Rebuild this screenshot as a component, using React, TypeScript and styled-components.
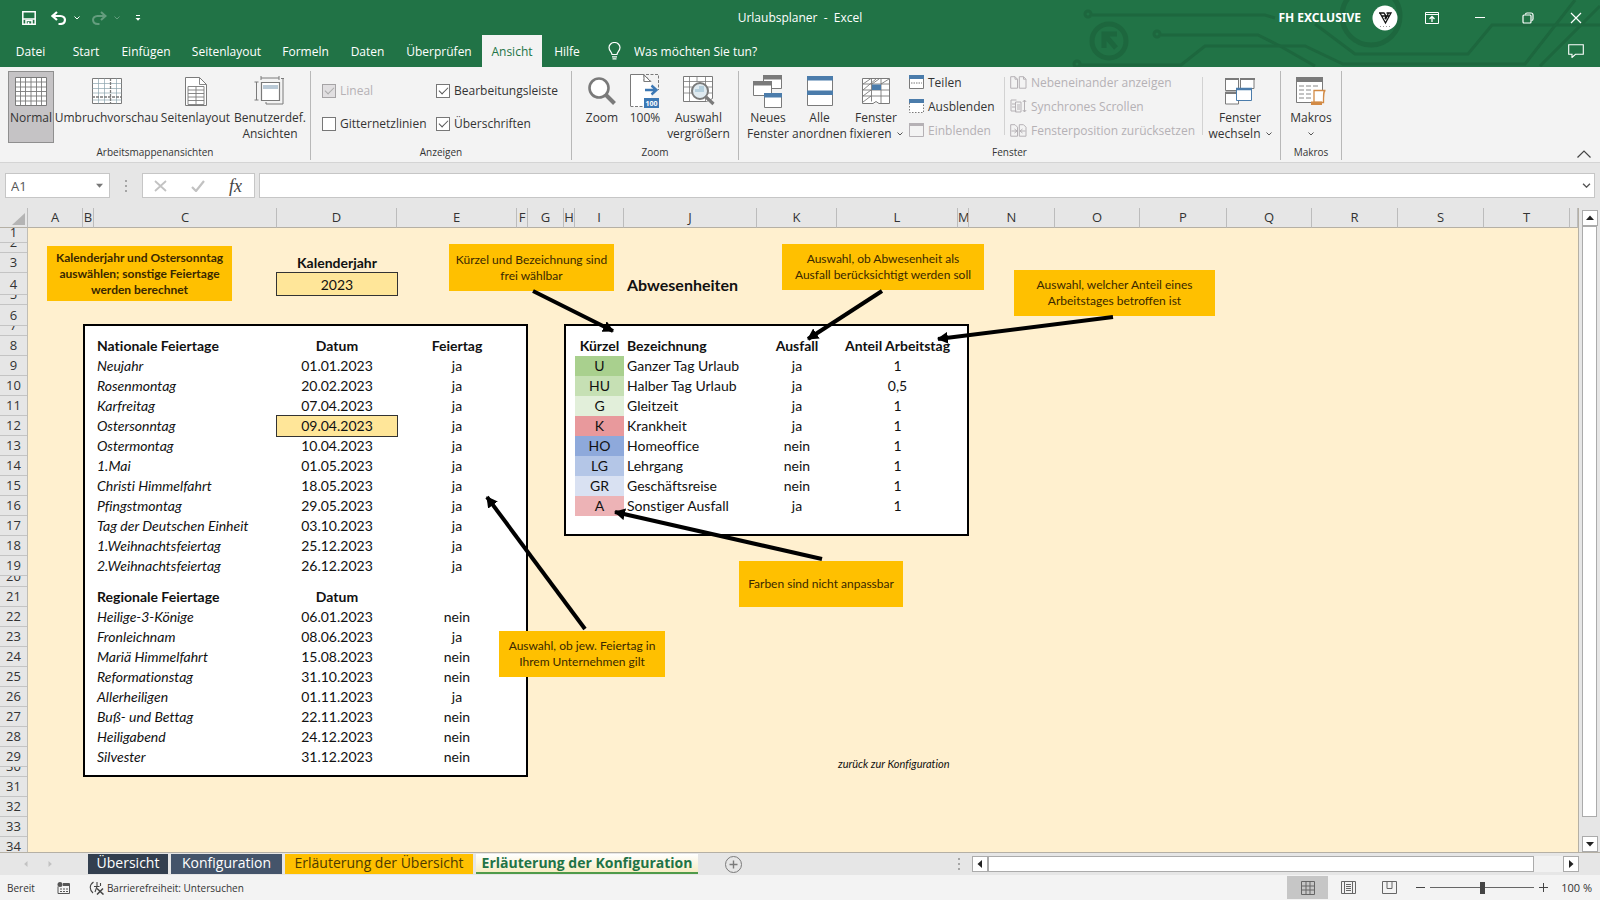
import React from 'react';
import styled, { createGlobalStyle, css } from 'styled-components';

const ui = `"Open Sans", "Noto Sans", sans-serif`;
const cellFont = `Lato, "Open Sans", sans-serif`;

const Global = createGlobalStyle`
  *, *::before, *::after { box-sizing: border-box; }
  body { margin: 0; font-family: ${ui}; font-size: 12px; color: #333; }
  button, input { font: inherit; color: inherit; margin: 0; padding: 0; }
  button { background: none; border: 0; }
  svg { display: block; flex: none; }
`;

const App = styled.div`
  display: flex;
  flex-direction: column;
  height: 100vh;
  overflow: hidden;
  background: #e6e6e6;
`;

/* ---------- title bar and tabs ---------- */

const Header = styled.header`
  position: relative;
  background: #217346;
  color: #fff;
`;
const Circuit = styled.svg`
  position: absolute;
  right: 0;
  top: 0;
`;
const TitleBar = styled.div`
  position: relative;
  display: grid;
  grid-template-columns: 1fr auto 1fr;
  align-items: center;
  height: 35px;
`;
const QuickAccess = styled.div`
  display: flex;
  align-items: center;
  padding-left: 22px;
`;
const QuickButton = styled.button<{ $gap: number; $dim?: boolean }>`
  margin-right: ${(p) => p.$gap}px;
  opacity: ${(p) => (p.$dim ? 0.3 : 1)};
`;
const Title = styled.h1`
  margin: 0;
  font-size: 12px;
  font-weight: 400;
  white-space: pre;
`;
const WindowArea = styled.div`
  display: flex;
  align-items: center;
  justify-content: flex-end;
`;
const Account = styled.button`
  display: flex;
  align-items: center;
  gap: 11px;
  margin-right: 10px;
  font-family: "Noto Sans", sans-serif;
  font-weight: 700;
`;
const WindowButton = styled.button`
  display: grid;
  place-items: center;
  width: 48px;
  height: 32px;
`;
const TabBar = styled.nav`
  position: relative;
  display: flex;
  height: 32px;
`;
const Tab = styled.button<{ $w: number; $active?: boolean }>`
  width: ${(p) => p.$w}px;
  white-space: nowrap;
  ${(p) => p.$active && css`background: #f3f3f3; color: #217346;`}
`;
const TellMe = styled.label`
  display: flex;
  align-items: center;
  gap: 13px;
  padding-left: 16px;
`;
const TellMeInput = styled.input`
  width: 160px;
  border: 0;
  outline: 0;
  background: transparent;
  &::placeholder { color: #fff; opacity: 1; }
`;
const Comment = styled.button`
  margin: 0 16px 0 auto;
`;

/* ---------- ribbon ---------- */

const Ribbon = styled.section`
  position: relative;
  display: flex;
  height: 96px;
  background: #f3f3f3;
  border-bottom: 1px solid #d4d4d4;
`;
const Group = styled.div<{ $w: number }>`
  display: flex;
  flex-direction: column;
  width: ${(p) => p.$w}px;
  margin: 4px 0 2px;
  border-right: 1px solid #b8b8b8;
`;
const GroupBody = styled.div<{ $pad: number }>`
  display: flex;
  height: 75px;
  padding-left: ${(p) => p.$pad}px;
`;
const GroupLabel = styled.div`
  font-size: 10px;
  line-height: 16px;
  text-align: center;
`;
const BigButton = styled.button<{ $w: number; $on?: boolean }>`
  display: flex;
  flex-direction: column;
  align-items: center;
  width: ${(p) => p.$w}px;
  height: 72px;
  line-height: 16px;
  white-space: nowrap;
  border: 1px solid ${(p) => (p.$on ? '#8f8f8f' : 'transparent')};
  background: ${(p) => (p.$on ? '#c5c3c5' : 'transparent')};
`;
const BigIcon = styled.span`
  display: grid;
  place-items: center;
  height: 38px;
`;
const Caption = styled.span`
  display: flex;
  align-items: center;
  gap: 5px;
  height: 16px;
  flex: none;
`;
const Checks = styled.div`
  display: grid;
  grid-template-columns: 114px auto;
  grid-template-rows: 33px 33px;
  align-items: center;
  padding-top: 3px;
`;
const CheckLabel = styled.label<{ $off?: boolean }>`
  display: flex;
  align-items: center;
  gap: 4px;
  white-space: nowrap;
  color: ${(p) => (p.$off ? '#b5b1b5' : '#333')};
`;
const Check = styled.input`
  appearance: none;
  display: grid;
  place-items: center;
  width: 14px;
  height: 14px;
  flex: none;
  border: 1px solid #777;
  background: #fff;
  &:disabled { border-color: #a5a3a5; background: #e1dfe1; }
  &:checked::after {
    content: '';
    width: 9px;
    height: 5px;
    margin-bottom: 3px;
    border: solid #555;
    border-width: 0 0 1px 1px;
    transform: rotate(-45deg);
  }
  &:checked:disabled::after { border-color: #aaa; }
`;
const SmallColumn = styled.div<{ $w: number }>`
  display: flex;
  flex-direction: column;
  width: ${(p) => p.$w}px;
  height: 58px;
  margin-top: 6px;
  border-right: 1px solid #d2d2d2;
`;
const SmallButton = styled.button<{ $off?: boolean }>`
  display: flex;
  align-items: center;
  gap: 4px;
  flex: none;
  height: 24px;
  padding-left: 5px;
  white-space: nowrap;
  color: ${(p) => (p.$off ? '#b5b1b5' : '#333')};
  &:first-child { margin-top: -7px; }
`;
const Collapse = styled.button`
  margin: auto 9px 4px auto;
`;

/* ---------- formula bar ---------- */

const FormulaRow = styled.div`
  display: flex;
  align-items: center;
  padding: 10px 5px;
  height: 45px;
`;
const NameBox = styled.div`
  display: flex;
  align-items: center;
  width: 105px;
  height: 25px;
  padding: 0 6px 0 5px;
  border: 1px solid #c6c6c6;
  background: #fff;
`;
const NameInput = styled.input`
  flex: 1;
  min-width: 0;
  border: 0;
  outline: 0;
  font-size: 13px;
  color: #555;
`;
const FxBox = styled.div`
  display: flex;
  align-items: center;
  justify-content: space-between;
  width: 113px;
  height: 25px;
  margin-right: 4px;
  padding: 0 12px 0 11px;
  border: 1px solid #c6c6c6;
  background: #fff;
`;
const Fx = styled.button`
  font-family: "Liberation Serif", serif;
  font-size: 18px;
  font-style: italic;
  line-height: 20px;
  color: #444;
`;
const FormulaBox = styled.div`
  display: flex;
  align-items: center;
  flex: 1;
  height: 25px;
  padding-right: 3px;
  border: 1px solid #c6c6c6;
  background: #fff;
`;
const FormulaInput = styled.input`
  flex: 1;
  border: 0;
  outline: 0;
`;
const Grip = styled.span<{ $m: string }>`
  width: 2px;
  height: 12px;
  margin: ${(p) => p.$m};
  background: repeating-linear-gradient(#a5a5a5 0 2px, transparent 2px 5px);
`;

/* ---------- sheet ---------- */

const Work = styled.main`
  display: flex;
  flex: 1;
  min-height: 0;
`;
const Sheet = styled.div`
  position: relative;
  flex: 1;
  min-width: 0;
  overflow: hidden;
  background: #fff0cf;
  border-right: 1px solid #b5b0a5;
`;
const GridTable = styled.table`
  width: 100%;
  table-layout: fixed;
  border-spacing: 0;
  font-family: ${cellFont};
  font-size: 14px;
  font-variant-ligatures: none;
  color: #111;
`;
const ColHead = styled.th`
  height: 20px;
  padding: 0;
  overflow: hidden;
  font-family: ${ui};
  font-size: 13px;
  font-weight: 400;
  line-height: 19px;
  color: #333;
  background: #e6e6e6;
  border-right: 1px solid #bcbcbc;
  border-bottom: 1px solid #b5b0a5;
`;
const RowHead = styled.th`
  padding: 0;
  font-family: ${ui};
  font-size: 13px;
  font-weight: 400;
  color: #333;
  background: #e6e6e6;
  border-right: 1px solid #c0bdb5;
`;
const RowNumber = styled.div<{ $h: number }>`
  display: flex;
  align-items: flex-end;
  justify-content: center;
  height: ${(p) => p.$h}px;
  overflow: hidden;
  line-height: 19px;
  border-bottom: 1px solid #c4c4c4;
`;
interface CellLook {
  $fill?: string;
  $align?: string;
  $bold?: boolean;
  $italic?: boolean;
  $size?: number;
  $boxed?: boolean;
  $edges?: string;
}
const Cell = styled.td<CellLook>`
  padding: 0;
  vertical-align: bottom;
  background: ${(p) => p.$fill || 'transparent'};
  ${(p) => p.$boxed && 'outline: 1px solid #333;'}
  ${(p) => p.$edges?.includes('l') && 'border-left: 2px solid #000;'}
  ${(p) => p.$edges?.includes('r') && 'border-right: 2px solid #000;'}
  ${(p) => p.$edges?.includes('b') && 'border-bottom: 2px solid #000;'}
`;
const CellText = styled.div<CellLook>`
  height: 20px;
  padding: 0 3px;
  line-height: 20px;
  white-space: nowrap;
  text-align: ${(p) => p.$align || 'center'};
  font-size: ${(p) => p.$size || 14}px;
  font-weight: ${(p) => (p.$bold ? 700 : 400)};
  font-style: ${(p) => (p.$italic ? 'italic' : 'normal')};
`;
const Arrows = styled.svg`
  position: absolute;
  left: 0;
  top: 20px;
  pointer-events: none;
`;
const Callout = styled.div<{ $x: number; $y: number; $w: number; $h: number; $bold?: boolean }>`
  position: absolute;
  left: ${(p) => p.$x}px;
  top: ${(p) => p.$y}px;
  width: ${(p) => p.$w}px;
  height: ${(p) => p.$h}px;
  display: grid;
  place-items: center;
  text-align: center;
  white-space: pre;
  background: #ffc000;
  color: #3a2800;
  font-family: ${cellFont};
  font-size: 12px;
  font-weight: ${(p) => (p.$bold ? 700 : 400)};
  line-height: 16px;
`;
const BackLink = styled.a`
  position: absolute;
  left: 838px;
  top: 548px;
  font-family: ${cellFont};
  font-size: 11px;
  font-style: italic;
  font-variant-ligatures: none;
  line-height: 16px;
  color: #111;
  text-decoration: none;
`;
const VScroll = styled.div`
  display: flex;
  flex-direction: column;
  width: 21px;
  padding: 2px 3px 0 3px;
`;
const HScroll = styled.div`
  display: flex;
  width: 607px;
  height: 16px;
  margin-right: 21px;
  background: #f1f1f1;
`;
const ScrollButton = styled.button`
  display: grid;
  place-items: center;
  width: 16px;
  height: 16px;
  flex: none;
  border: 1px solid #ababab;
  background: #fff;
`;
const Thumb = styled.div<{ $gap: string }>`
  flex: 1;
  margin: ${(p) => p.$gap};
  border: 1px solid #ababab;
  background: #fff;
`;

/* ---------- sheet tabs and status ---------- */

const SheetBar = styled.div`
  display: flex;
  align-items: center;
  height: 23px;
  border-top: 1px solid #b5b0a5;
`;
const SheetNav = styled.div`
  display: flex;
  gap: 18px;
  width: 88px;
  padding-left: 23px;
`;
const SheetTab = styled.button<{ $w: number; $bg: string; $fg?: string; $active?: boolean }>`
  width: ${(p) => p.$w}px;
  height: 20px;
  margin-right: 3px;
  padding-bottom: 3px;
  font-size: 14px;
  line-height: 17px;
  white-space: nowrap;
  background: ${(p) => p.$bg};
  color: ${(p) => p.$fg || '#fff'};
  ${(p) => p.$active && css`font-weight: 700; border-bottom: 2px solid #4f9a4a; padding-bottom: 1px;`}
`;
const AddSheet = styled.button`
  margin-left: 24px;
`;
const StatusBar = styled.footer`
  display: flex;
  align-items: center;
  height: 25px;
  padding: 0 8px 0 7px;
  background: #f3f3f3;
  font-size: 10px;
`;
const StatusButton = styled.button<{ $m: number }>`
  display: flex;
  align-items: center;
  gap: 2px;
  margin-left: ${(p) => p.$m}px;
`;
const ViewButton = styled.button<{ $on?: boolean }>`
  display: grid;
  place-items: center;
  width: 41px;
  height: 23px;
  background: ${(p) => (p.$on ? '#c6c6c6' : 'transparent')};
`;
const Spacer = styled.div`
  flex: 1;
`;
const ZoomRange = styled.input`
  appearance: none;
  width: 104px;
  height: 14px;
  margin: 0 5px;
  background: linear-gradient(#666, #666) center / 100% 1px no-repeat;
  &::-webkit-slider-thumb {
    appearance: none;
    width: 5px;
    height: 12px;
    background: #444;
  }
`;
const ZoomValue = styled.span`
  width: 44px;
  font-size: 11px;
  text-align: right;
`;

/* ---------- data ---------- */

const columns: [string, number][] = [
  ['A', 55], ['B', 11], ['C', 183], ['D', 120], ['E', 120], ['F', 11], ['G', 36],
  ['H', 11], ['I', 49], ['J', 133], ['K', 80], ['L', 121], ['M', 11], ['N', 86],
  ['O', 85], ['P', 87], ['Q', 85], ['R', 86], ['S', 86], ['T', 86],
];
const rowHeights: Record<number, number> = { 1: 15, 2: 10, 4: 22, 5: 10, 6: 21, 7: 10, 20: 11, 30: 10 };

interface CellData extends CellLook { text: string }
const cells: Record<string, CellData> = {
  D3: { text: 'Kalenderjahr', $bold: true },
  D4: { text: '2023', $boxed: true, $fill: '#ffe699' },
  J4: { text: 'Abwesenheiten', $bold: true, $align: 'left', $size: 16 },
  C8: { text: 'Nationale Feiertage', $bold: true, $align: 'left' },
  D8: { text: 'Datum', $bold: true },
  E8: { text: 'Feiertag', $bold: true },
  C21: { text: 'Regionale Feiertage', $bold: true, $align: 'left' },
  D21: { text: 'Datum', $bold: true },
  I8: { text: 'Kürzel', $bold: true },
  J8: { text: 'Bezeichnung', $bold: true, $align: 'left' },
  K8: { text: 'Ausfall', $bold: true },
  L8: { text: 'Anteil Arbeitstag', $bold: true },
};
const addHoliday = (row: number, [name, date, valid]: string[]) => {
  cells[`C${row}`] = { text: name, $italic: true, $align: 'left' };
  cells[`D${row}`] = { text: date };
  cells[`E${row}`] = { text: valid };
};
[
  ['Neujahr', '01.01.2023', 'ja'], ['Rosenmontag', '20.02.2023', 'ja'],
  ['Karfreitag', '07.04.2023', 'ja'], ['Ostersonntag', '09.04.2023', 'ja'],
  ['Ostermontag', '10.04.2023', 'ja'], ['1.Mai', '01.05.2023', 'ja'],
  ['Christi Himmelfahrt', '18.05.2023', 'ja'], ['Pfingstmontag', '29.05.2023', 'ja'],
  ['Tag der Deutschen Einheit', '03.10.2023', 'ja'],
  ['1.Weihnachtsfeiertag', '25.12.2023', 'ja'], ['2.Weihnachtsfeiertag', '26.12.2023', 'ja'],
].forEach((h, i) => addHoliday(9 + i, h));
[
  ['Heilige-3-Könige', '06.01.2023', 'nein'], ['Fronleichnam', '08.06.2023', 'ja'],
  ['Mariä Himmelfahrt', '15.08.2023', 'nein'], ['Reformationstag', '31.10.2023', 'nein'],
  ['Allerheiligen', '01.11.2023', 'ja'], ['Buß- und Bettag', '22.11.2023', 'nein'],
  ['Heiligabend', '24.12.2023', 'nein'], ['Silvester', '31.12.2023', 'nein'],
].forEach((h, i) => addHoliday(22 + i, h));
cells.D12.$boxed = true;
cells.D12.$fill = '#ffe699';
[
  ['U', 'Ganzer Tag Urlaub', 'ja', '1', '#a9d08e'], ['HU', 'Halber Tag Urlaub', 'ja', '0,5', '#c6e0b4'],
  ['G', 'Gleitzeit', 'ja', '1', '#e2efda'], ['K', 'Krankheit', 'ja', '1', '#e8999c'],
  ['HO', 'Homeoffice', 'nein', '1', '#8ea9db'], ['LG', 'Lehrgang', 'nein', '1', '#b4c6e7'],
  ['GR', 'Geschäftsreise', 'nein', '1', '#d9e1f2'], ['A', 'Sonstiger Ausfall', 'ja', '1', '#edb3b6'],
].forEach(([code, label, out, share, fill], i) => {
  const row = 9 + i;
  cells[`I${row}`] = { text: code, $fill: fill };
  cells[`J${row}`] = { text: label, $align: 'left' };
  cells[`K${row}`] = { text: out };
  cells[`L${row}`] = { text: share };
});

const panels = [
  { left: 'B', right: 'F', top: 7, bottom: 30 },
  { left: 'H', right: 'M', top: 7, bottom: 17 },
];
/* The upper edge of a panel is the lower border of the row above it. */
const panelLook = (col: string, row: number): CellLook => {
  const p = panels.find((q) => col >= q.left && col <= q.right && row >= q.top - 1 && row <= q.bottom);
  if (!p) return {};
  if (row === p.top - 1) return { $edges: 'b' };
  const edges = [
    col === p.left && 'l', col === p.right && 'r', row === p.bottom && 'b',
  ].filter(Boolean).join('');
  return { $fill: '#fff', $edges: edges };
};

const arrows = [
  [533, 63, 613, 103], [882, 63, 808, 111], [1113, 89, 938, 111], [822, 331, 615, 284], [585, 401, 487, 269],
];

/* ---------- icons ---------- */

const Chevron = ({ color = '#555', size = 6 }) => (
  <svg width={size} height={size / 2 + 1} viewBox="0 0 6 4" fill="none" stroke={color}><path d="M.5 .5L3 3L5.5 .5" /></svg>
);
const Caret = ({ dir = 'down', color = '#222', size = 8 }: { dir?: string; color?: string; size?: number }) => {
  const turn = { down: 0, left: 90, up: 180, right: 270 }[dir];
  return (
    <svg width={size} height={size} viewBox="0 0 8 8"><path transform={`rotate(${turn} 4 4)`} d="M0 2h8L4 6.500z" fill={color} /></svg>
  );
};
const icon = (w: number, h: number, body: React.ReactNode) => (
  <svg width={w} height={h} viewBox={`0 0 ${w} ${h}`} fill="none" stroke="#7a7a7a">{body}</svg>
);
const icons = {
  save: icon(14, 14, <><g stroke="#fff" strokeWidth="1.500"><path d="M.8.8h12.400v12.400H.8z M1 8h12" /><path d="M4 13V9.500h6V13M6.500 11v2" /></g></>),
  undo: icon(16, 14, <path d="M6 1L1.500 5L6 9M2 5h7.500c6 0 6 8-.5 8H7.500" stroke="#fff" strokeWidth="2.200" />),
  redo: icon(16, 14, <path d="M10 1l4.500 4L10 9M14 5H6.500c-6 0-6 8 .5 8h1.500" stroke="#fff" strokeWidth="2" />),
  custom: icon(6, 8, <><path d="M1 1.500h4" stroke="#fff" /><path d="M.5 4h5L3 6.800z" fill="#fff" stroke="none" /></>),
  avatar: icon(26, 26, <><circle cx="13" cy="13" r="12.500" fill="#fff" stroke="none" /><g stroke="#111" strokeWidth="1.300"><path d="M7 8h5l2 3h3.500M8 8l5.500 10L19 8h-4.500M9.500 11h4.500l-1 3M16.500 8l-3 6.500" /></g><path d="M8 21.500h10" strokeDasharray="1 2" stroke="#999" /></>),
  ribbonOpt: icon(14, 12, <g stroke="#fff"><path d="M.5.5h13v11H.5zM.5 2.500h13" /><path d="M7 10V5M4.500 7L7 4.500L9.500 7" strokeWidth="1.300" /></g>),
  minimize: icon(10, 10, <path d="M0 4.500h10" stroke="#fff" />),
  restore: icon(12, 12, <g stroke="#fff" strokeWidth="1.200"><rect x="1" y="3" width="8" height="8" rx="1" /><path d="M3.500 2.500c0-1 .5-1.500 1.500-1.500h4c1.500 0 2 .7 2 2v4c0 1-.5 1.500-1.500 1.500" /></g>),
  close: icon(12, 12, <path d="M1 1l10 10M11 1L1 11" stroke="#fff" strokeWidth="1.200" />),
  bulb: icon(13, 18, <g stroke="#fff" strokeWidth="1.200"><path d="M4 12.500c0-2.500-3-3.500-3-7a5.500 5 0 0 1 11 0c0 3.500-3 4.500-3 7z" /><path d="M4 14.800h5M4.500 16.900h4" /></g>),
  comment: icon(16, 14, <path d="M.7.700h14.600v9.600H7.500L4 13.500v-3.200H.7z" stroke="#fff" strokeWidth="1.100" />),
  normal: icon(32, 29, <><path d="M.5.5h31v28H.5z" fill="#fff" /><path d="M5.500.5v28M10.500.5v28M16 .5v28M21.500.5v28M26.500.5v28M.5 5h31M.5 10h31M.5 14.500h31M.5 19h31M.5 24h31" strokeWidth=".9" /></>),
  pagebreak: icon(30, 26, <><path d="M.5.5h29v25H.5z" fill="#fff" /><path d="M6.500.5v25M12.500.5v25M24.500.5v25M.5 5.500h29M.5 10.500h29M.5 15h29M.5 22h29" strokeWidth=".7" stroke="#8ba3ad" /><path d="M18.500 0v26M0 19h30" strokeWidth="1.300" strokeDasharray="3 1" /></>),
  pagelayout: icon(22, 29, <><path d="M.5.5h14l7 7v21H.5z" fill="#fff" /><path d="M14.500.5v7h7M3 9.500h16v18H3zM3 13h16M3 16.500h16M3 20h16M3 23.500h16M11 9.500v18" strokeWidth=".9" /></>),
  custviews: icon(32, 30, <><path d="M7.500 6.500h18v18h-18z" fill="#fff" strokeWidth="1.200" /><path d="M9 9h15v4H9z" fill="#b9c9d6" stroke="none" /><path d="M7 2h18M7 0v4M25 0v4M2.500 6v18M.5 6h4M.5 24h4M29 2.500V28H12v-2M27 2.500h3" /></>),
  zoom: icon(30, 30, <><circle cx="12" cy="12" r="9.500" fill="#fff" strokeWidth="2.600" /><path d="M19 19l8.500 8.500" strokeWidth="4" /></>),
  hundred: icon(30, 34, <><path d="M.5.500H15l6 6.500v21.500L16 33H.5z" fill="#fff" stroke="none" /><path d="M14 .5H.5V32" /><path d="M14 .5v7h7L14 .5M16 .5h12.500V16M.5 32.500H14" strokeDasharray="3 1.500" /><path d="M14 1v6.500h6.500z" fill="#fff" /><path d="M15 16h11M21.500 11.500L26.500 16l-5 4.500" stroke="#3c78b4" strokeWidth="2.400" /><path d="M14 24h15v10H14z" fill="#3c78b4" stroke="none" /><text x="15.500" y="32" fontSize="7" fontWeight="700" fill="#fff" stroke="none">100</text></>),
  zoomsel: icon(32, 30, <><path d="M.5.5h29v22l-6 3H.5z" fill="#fff" /><path d="M6.500.5v25M22.500.5v25M.5 5.500h29M.5 11h29M.5 17h29M14 .5v5" strokeWidth=".8" /><circle cx="17" cy="15" r="8" fill="#dfeaf0" strokeWidth="2" /><path d="M12 16v-3h4v-3h5v6z" fill="#b5cfdd" stroke="none" /><path d="M23 21l7.500 7" strokeWidth="3.200" /></>),
  newwin: icon(30, 33, <><path d="M10.500.5h18v13h-18z" fill="#fff" /><path d="M10 0h19v4.500H10z" fill="#7a7a7a" stroke="none" /><path d="M.5 6.500h18v14H.5z" fill="#fff" /><path d="M0 6h19v4.500H0z" fill="#7a7a7a" stroke="none" /><path d="M11.500 18.500h17v14h-17z" fill="#fff" /><path d="M11 18h18v4.500H11z" fill="#4b7cab" stroke="none" /></>),
  arrange: icon(26, 30, <><path d="M.5.5h25v29H.5z" fill="#fff" /><path d="M0 0h26v4.500H0zM0 14.500h26V19H0z" fill="#4b7cab" stroke="none" /></>),
  freeze: icon(28, 26, <><path d="M.5.5h27v25H17l-3-2-3 2H.5z" fill="#fff" /><path d="M9.500.5v23M19 .5v25M.5 6h27M.5 12h27M.5 18h27M1 6L9 .5M1 12l13-11M1 18L9 12M1 24l8-6M19 6L27 1M10 6l7-5" strokeWidth=".9" /><path d="M10 6.500h9V12h-9z" fill="#4b7cab" stroke="none" /></>),
  split: icon(15, 14, <><path d="M.5.5h14v13H.5z" fill="#fff" /><path d="M0 0h15v4H0z" fill="#4b7cab" stroke="none" /><path d="M2 8h11" strokeDasharray="1.500 1" /></>),
  hide: icon(15, 14, <><path d="M.5 4v9.500h14V4" fill="#fff" strokeDasharray="1.500 1.500" /><path d="M0 0h15v4H0z" fill="#4b7cab" stroke="none" /></>),
  show: icon(15, 14, <><path d="M.5 .5h14v13H.5z" stroke="#b5b1b5" /><path d="M0 0h15v3H0z" fill="#b5b1b5" stroke="none" /></>),
  side: icon(17, 13, <path d="M.7.700h4.300l2.500 2.500v9H.7zM5 .7v2.500h2.500M9.300.700H13.500l2.500 2.500v9H9.300zM13.500.700v2.500h2.500" stroke="#b5b1b5" />),
  sync: icon(17, 15, <path d="M6.500 1H1v11h5.500M5.500 3h5.500v10H5.500zM7 6h3M7 8h3M7 10h3M2 5h3M2 8h3M14.500 1v12M12.800 3l1.700-2 1.700 2M12.800 11l1.700 2 1.700-2" stroke="#b5b1b5" />),
  reset: icon(17, 13, <path d="M.7.700h4.300l2.500 2.500v9H.7zM9.300.700H13.500l2.500 2.500v9H9.300zM1.500 7h5M4.500 5l2.500 2-2.500 2M15.500 7h-5M12.500 5L10 7l2.500 2" stroke="#b5b1b5" />),
  switchwin: icon(30, 27, <><path d="M.5.5h13v12H.5zM15.500.500h13.500v10H15.500zM.5 14h13v12H.5z" fill="#fff" /><path d="M0 1h14M15 1h15M0 15h14" strokeWidth="2" /><path d="M11.500 10.500h15v12h-15z" fill="#fff" stroke="#4b7cab" /><path d="M11 11h16" stroke="#4b7cab" strokeWidth="2.500" /></>),
  macros: icon(31, 29, <><path d="M.5.5h26v25H.5z" fill="#fff" /><path d="M0 0h27v5H0z" fill="#7a7a7a" stroke="none" /><path d="M3 9h21M3 13h13M3 17h13M3 21h13" strokeDasharray="5 2" strokeWidth=".9" /><path d="M18 13.500h11.500c-2 0-2 3-2 12H18z" fill="#fff" stroke="#d28a45" strokeWidth="1.300" /><path d="M15 24.500h11v3.500H15z" fill="#d28a45" stroke="none" /></>),
  collapse: icon(14, 8, <path d="M.5 7.500L7 1l6.500 6.500" stroke="#444" strokeWidth="1.200" />),
  cross: icon(13, 12, <path d="M1 1l11 10M12 1L1 11" stroke="#c2c2c2" strokeWidth="1.800" />),
  tick: icon(14, 12, <path d="M1 7l4 4L13 1" stroke="#c2c2c2" strokeWidth="2.200" />),
  plus: icon(17, 17, <><circle cx="8.500" cy="8.500" r="8" /><path d="M8.500 4.500v8M4.500 8.500h8" strokeWidth="1.400" /></>),
  macroRec: icon(13, 12, <g stroke="#555"><path d="M1 4.500v7h11.500V1.500H6" /><path d="M6 3h6.500" strokeWidth="2" /><circle cx="3" cy="2.500" r="2.500" fill="#555" stroke="none" /><path d="M3 7h8M3 9.500h8" strokeDasharray="2 1" /></g>),
  access: icon(16, 14, <g stroke="#444" strokeWidth="1.100"><path d="M4.500 1C0 4 .500 9 4 12M5 5.500h5.500M8 1v4.500L6 11M11.500 2v3" /><path d="M8 7.500l6.500 6M14 7.500L8 13.500" strokeWidth="1.500" /></g>),
  vNormal: icon(14, 14, <path d="M.5.500h13v13H.5zM5 .5v13M9 .5v13M.5 5h13M.5 9h13" stroke="#666" />),
  vLayout: icon(15, 13, <path d="M.5.500h14v12H.5zM3.500.500v12M11.500.500v12M5 3.500h5M5 5.500h5M5 7.500h5M5 9.500h5" stroke="#666" />),
  vBreak: icon(15, 13, <path d="M.5.500h14v12H.5zM5 .5v7h5V.5M10 7.500" stroke="#666" />),
};

const Big = ({ w, img, lines, on, menu }: { w: number; img: React.ReactNode; lines: string[]; on?: boolean; menu?: boolean }) => (
  <BigButton $w={w} $on={on}>
    <BigIcon>{img}</BigIcon>
    {lines.map((line, i) => (
      <Caption key={line}>{line}{menu && i === 1 && <Chevron />}</Caption>
    ))}
    {menu && lines.length === 1 && <Caption><Chevron /></Caption>}
  </BigButton>
);

const CheckItem = ({ label, checked, off }: { label: string; checked?: boolean; off?: boolean }) => (
  <CheckLabel $off={off}><Check type="checkbox" defaultChecked={checked} disabled={off} />{label}</CheckLabel>
);

const RibbonGroup = ({ w, pad, label, children }: { w: number; pad: number; label: string; children: React.ReactNode }) => (
  <Group $w={w}><GroupBody $pad={pad}>{children}</GroupBody><GroupLabel>{label}</GroupLabel></Group>
);

export default function Excel() {
  return (
    <App>
      <Global />
      <Header>
        <Circuit width="540" height="67" viewBox="0 0 540 67" fill="none" stroke="#1d673e" strokeWidth="3">
          <circle cx="28" cy="14" r="3" /><path d="M32 15h173l10 3M255 24l40 30h113l24-29h108" />
          <circle cx="97" cy="34" r="3" /><path d="M101 35h97l22 11 35 20" />
          <circle cx="17" cy="64" r="3" /><path d="M21 65h100l24-19h100l38 18h182L515 0M480 66l60-60" />
          <circle cx="49" cy="41" r="17" strokeWidth="5" /><path d="M44 48V34h13M44 34l12 14" strokeWidth="5" />
          <circle cx="311" cy="16" r="29" strokeWidth="5" />
        </Circuit>
        <TitleBar>
          <QuickAccess>
            <QuickButton $gap={15} aria-label="Speichern">{icons.save}</QuickButton>
            <QuickButton $gap={7} aria-label="Rückgängig">{icons.undo}</QuickButton>
            <QuickButton $gap={11} aria-label="Rückgängig-Liste"><Chevron color="#fff" /></QuickButton>
            <QuickButton $gap={7} $dim aria-label="Wiederholen">{icons.redo}</QuickButton>
            <QuickButton $gap={15} $dim aria-label="Wiederholen-Liste"><Chevron color="#fff" /></QuickButton>
            <QuickButton $gap={0} aria-label="Anpassen">{icons.custom}</QuickButton>
          </QuickAccess>
          <Title>{'Urlaubsplaner  -  Excel'}</Title>
          <WindowArea>
            <Account>FH EXCLUSIVE{icons.avatar}</Account>
            <WindowButton aria-label="Menüband-Anzeigeoptionen">{icons.ribbonOpt}</WindowButton>
            <WindowButton aria-label="Minimieren">{icons.minimize}</WindowButton>
            <WindowButton aria-label="Verkleinern">{icons.restore}</WindowButton>
            <WindowButton aria-label="Schließen">{icons.close}</WindowButton>
          </WindowArea>
        </TitleBar>
        <TabBar>
          <Tab $w={61}>Datei</Tab>
          <Tab $w={50}>Start</Tab>
          <Tab $w={70}>Einfügen</Tab>
          <Tab $w={91}>Seitenlayout</Tab>
          <Tab $w={67}>Formeln</Tab>
          <Tab $w={57}>Daten</Tab>
          <Tab $w={86}>Überprüfen</Tab>
          <Tab $w={60} $active>Ansicht</Tab>
          <Tab $w={50}>Hilfe</Tab>
          <TellMe>{icons.bulb}<TellMeInput placeholder="Was möchten Sie tun?" /></TellMe>
          <Comment aria-label="Kommentare">{icons.comment}</Comment>
        </TabBar>
      </Header>

      <Ribbon>
        <RibbonGroup w={311} pad={8} label="Arbeitsmappenansichten">
          <Big w={46} img={icons.normal} lines={['Normal']} on />
          <Big w={105} img={icons.pagebreak} lines={['Umbruchvorschau']} />
          <Big w={73} img={icons.pagelayout} lines={['Seitenlayout']} />
          <Big w={76} img={icons.custviews} lines={['Benutzerdef.', 'Ansichten']} />
        </RibbonGroup>
        <RibbonGroup w={261} pad={11} label="Anzeigen">
          <Checks>
            <CheckItem label="Lineal" checked off />
            <CheckItem label="Bearbeitungsleiste" checked />
            <CheckItem label="Gitternetzlinien" />
            <CheckItem label="Überschriften" checked />
          </Checks>
        </RibbonGroup>
        <RibbonGroup w={167} pad={7} label="Zoom">
          <Big w={46} img={icons.zoom} lines={['Zoom']} />
          <Big w={40} img={icons.hundred} lines={['100%']} />
          <Big w={67} img={icons.zoomsel} lines={['Auswahl', 'vergrößern']} />
        </RibbonGroup>
        <RibbonGroup w={542} pad={6} label="Fenster">
          <Big w={46} img={icons.newwin} lines={['Neues', 'Fenster']} />
          <Big w={57} img={icons.arrange} lines={['Alle', 'anordnen']} />
          <Big w={56} img={icons.freeze} lines={['Fenster', 'fixieren']} menu />
          <SmallColumn $w={101}>
            <SmallButton>{icons.split}Teilen</SmallButton>
            <SmallButton>{icons.hide}Ausblenden</SmallButton>
            <SmallButton $off disabled>{icons.show}Einblenden</SmallButton>
          </SmallColumn>
          <SmallColumn $w={198}>
            <SmallButton $off disabled>{icons.side}Nebeneinander anzeigen</SmallButton>
            <SmallButton $off disabled>{icons.sync}Synchrones Scrollen</SmallButton>
            <SmallButton $off disabled>{icons.reset}Fensterposition zurücksetzen</SmallButton>
          </SmallColumn>
          <Big w={74} img={icons.switchwin} lines={['Fenster', 'wechseln']} menu />
        </RibbonGroup>
        <RibbonGroup w={61} pad={4} label="Makros">
          <Big w={52} img={icons.macros} lines={['Makros']} menu />
        </RibbonGroup>
        <Collapse aria-label="Menüband reduzieren">{icons.collapse}</Collapse>
      </Ribbon>

      <FormulaRow>
        <NameBox>
          <NameInput aria-label="Namenfeld" defaultValue="A1" />
          <button aria-label="Namen"><Caret color="#777" size={7} /></button>
        </NameBox>
        <Grip $m="0 15px" />
        <FxBox>
          <button aria-label="Abbrechen">{icons.cross}</button>
          <button aria-label="Eingeben">{icons.tick}</button>
          <Fx>fx</Fx>
        </FxBox>
        <FormulaBox>
          <FormulaInput aria-label="Bearbeitungsleiste" />
          <button aria-label="Erweitern"><Chevron size={9} /></button>
        </FormulaBox>
      </FormulaRow>

      <Work>
        <Sheet>
          <GridTable>
            <colgroup>
              <col width={28} />
              {columns.map(([name, w]) => <col key={name} width={w} />)}
              <col />
            </colgroup>
            <thead>
              <tr>
                <ColHead aria-label="Alles auswählen">
                  <svg width="28" height="19"><path d="M25 5v12H12z" fill="#b4b4b4" /></svg>
                </ColHead>
                {columns.map(([name]) => <ColHead key={name}>{name}</ColHead>)}
                <ColHead />
              </tr>
            </thead>
            <tbody>
              {Array.from({ length: 34 }, (_, i) => i + 1).map((row) => (
                <tr key={row}>
                  <RowHead><RowNumber $h={rowHeights[row] || 20}>{row}</RowNumber></RowHead>
                  {columns.map(([col]) => {
                    const { text, ...look } = cells[col + row] || { text: '' };
                    return (
                      <Cell key={col} {...panelLook(col, row)} {...look}>
                        {text && <CellText {...look}>{text}</CellText>}
                      </Cell>
                    );
                  })}
                  <Cell />
                </tr>
              ))}
            </tbody>
          </GridTable>
          <Callout $x={47} $y={38} $w={185} $h={55} $bold>{'Kalenderjahr und Ostersonntag\nauswählen; sonstige Feiertage\nwerden berechnet'}</Callout>
          <Callout $x={449} $y={36} $w={165} $h={47}>{'Kürzel und Bezeichnung sind\nfrei wählbar'}</Callout>
          <Callout $x={782} $y={36} $w={202} $h={46}>{'Auswahl, ob Abwesenheit als\nAusfall berücksichtigt werden soll'}</Callout>
          <Callout $x={1014} $y={62} $w={201} $h={46}>{'Auswahl, welcher Anteil eines\nArbeitstages betroffen ist'}</Callout>
          <Callout $x={739} $y={353} $w={164} $h={46}>Farben sind nicht anpassbar</Callout>
          <Callout $x={499} $y={423} $w={166} $h={46}>{'Auswahl, ob jew. Feiertag in\nIhrem Unternehmen gilt'}</Callout>
          <BackLink href="#konfiguration">zurück zur Konfiguration</BackLink>
          <Arrows width="1200" height="620">
            <defs>
              <marker id="head" markerUnits="userSpaceOnUse" markerWidth="12" markerHeight="12" refX="10" refY="6" orient="auto">
                <path d="M0 0L11 6L0 12z" />
              </marker>
            </defs>
            {arrows.map(([x1, y1, x2, y2]) => (
              <line key={x1} x1={x1} y1={y1} x2={x2} y2={y2} stroke="#000" strokeWidth="4" markerEnd="url(#head)" />
            ))}
          </Arrows>
        </Sheet>
        <VScroll>
          <ScrollButton aria-label="Nach oben"><Caret dir="up" /></ScrollButton>
          <Thumb $gap="0 0 19px" />
          <ScrollButton aria-label="Nach unten"><Caret /></ScrollButton>
        </VScroll>
      </Work>

      <SheetBar>
        <SheetNav>
          <button aria-label="Vorheriges Blatt"><Caret dir="left" color="#c2c2c2" size={6} /></button>
          <button aria-label="Nächstes Blatt"><Caret dir="right" color="#c2c2c2" size={6} /></button>
        </SheetNav>
        <SheetTab $w={80} $bg="#333f4f">Übersicht</SheetTab>
        <SheetTab $w={111} $bg="#44546a">Konfiguration</SheetTab>
        <SheetTab $w={188} $bg="#ffc000" $fg="#4d3a00">Erläuterung der Übersicht</SheetTab>
        <SheetTab $w={222} $bg="linear-gradient(#fff, #f7edc4)" $fg="#217346" $active>Erläuterung der Konfiguration</SheetTab>
        <AddSheet aria-label="Neues Blatt">{icons.plus}</AddSheet>
        <Spacer />
        <Grip $m="0 12px 0 0" />
        <HScroll>
          <ScrollButton aria-label="Nach links"><Caret dir="left" /></ScrollButton>
          <Thumb $gap="0 29px 0 0" />
          <ScrollButton aria-label="Nach rechts"><Caret dir="right" /></ScrollButton>
        </HScroll>
      </SheetBar>

      <StatusBar>
        <span>Bereit</span>
        <StatusButton $m={22} aria-label="Makro aufzeichnen">{icons.macroRec}</StatusButton>
        <StatusButton $m={19}>{icons.access}Barrierefreiheit: Untersuchen</StatusButton>
        <Spacer />
        <ViewButton $on aria-label="Normal">{icons.vNormal}</ViewButton>
        <ViewButton aria-label="Seitenlayout">{icons.vLayout}</ViewButton>
        <ViewButton aria-label="Umbruchvorschau">{icons.vBreak}</ViewButton>
        <StatusButton $m={6} aria-label="Verkleinern">{icon(9, 9, <path d="M0 4.500h9" stroke="#444" />)}</StatusButton>
        <ZoomRange type="range" min={10} max={190} defaultValue={100} aria-label="Zoom" />
        <button aria-label="Vergrößern">{icon(9, 9, <path d="M0 4.500h9M4.500 0v9" stroke="#444" />)}</button>
        <ZoomValue>100 %</ZoomValue>
      </StatusBar>
    </App>
  );
}
